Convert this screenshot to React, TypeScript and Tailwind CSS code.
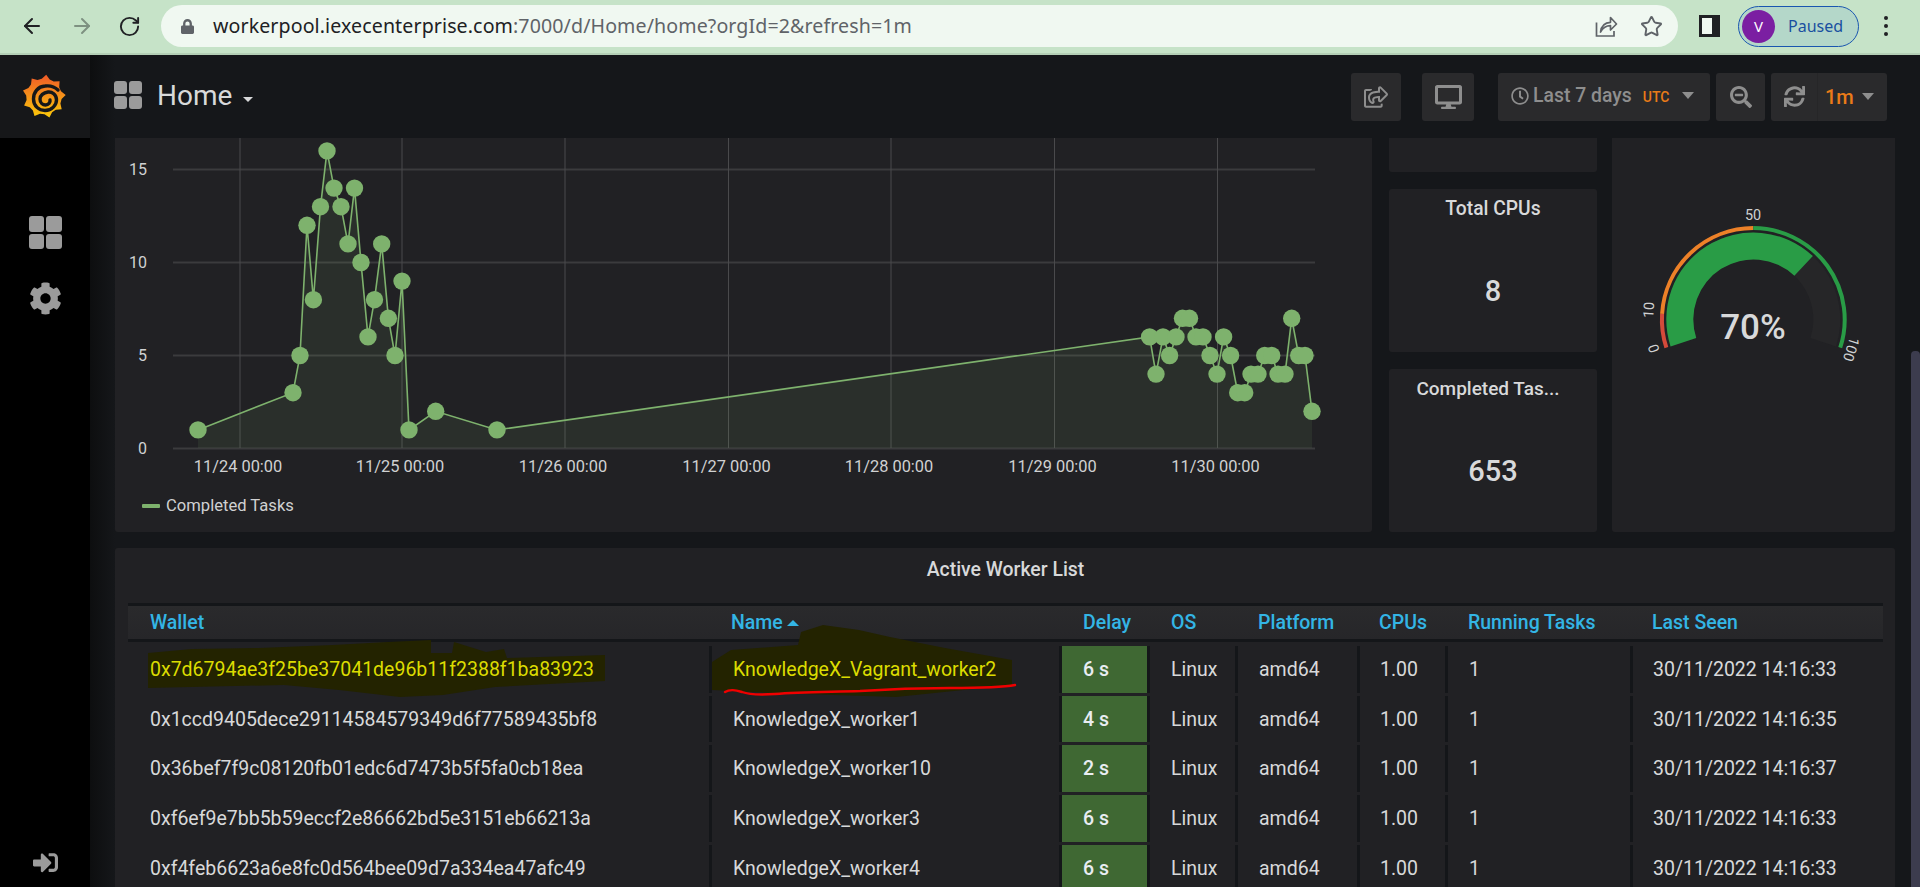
import React from "react";
import { ArrowLeft, ArrowRight, RotateCw, Star } from "lucide-react";
import { FaCog, FaDesktop, FaLock, FaRegClock, FaRegShareSquare, FaSearchMinus, FaSignInAlt, FaSync } from "react-icons/fa";

const pts: [number, number][] = [
  [198, 1], [293, 3], [300, 5], [307, 12], [313.4, 8], [320.5, 13], [327, 16], [334, 14], [341, 13], [348, 11], [354.5, 14],
  [361, 10], [368, 6], [374.5, 8], [381.7, 11], [388.4, 7], [395, 5], [402, 9], [409, 1], [435.7, 2], [497, 1],
  [1149.6, 6], [1156, 4], [1163, 6], [1169.6, 5], [1176, 6], [1182.5, 7], [1189.5, 7], [1196, 6], [1203, 6], [1210, 5],
  [1217, 4], [1223.6, 6], [1230.6, 5], [1237.7, 3], [1244.7, 3], [1251, 4], [1258, 4], [1264.7, 5], [1271.7, 5], [1278, 4],
  [1285, 4], [1291.7, 7], [1298.7, 5], [1305, 5], [1312, 2],
];
const yOf = (v: number) => 448.5 - v * 18.6;
const line = pts.map(([x, v]) => `${x},${yOf(v)}`).join(" ");
const area = `198,448 ${line} 1312,448`;
const vgrid: [number, string][] = [
  [240, "11/24 00:00"], [402, "11/25 00:00"], [565, "11/26 00:00"], [728.5, "11/27 00:00"],
  [891, "11/28 00:00"], [1054.5, "11/29 00:00"], [1217.5, "11/30 00:00"],
];

const cx = 1753.3, cy = 319.5;
const P = (r: number, a: number) => {
  const t = (a * Math.PI) / 180;
  return `${(cx - r * Math.cos(t)).toFixed(2)} ${(cy - r * Math.sin(t)).toFixed(2)}`;
};
const arc = (r: number, a: number, b: number) => `M${P(r, a)} A${r} ${r} 0 ${b - a > 180 ? 1 : 0} 1 ${P(r, b)}`;
const band = (r0: number, r1: number, a: number, b: number) =>
  `M${P(r1, a)} A${r1} ${r1} 0 ${b - a > 180 ? 1 : 0} 1 ${P(r1, b)} L${P(r0, b)} A${r0} ${r0} 0 ${b - a > 180 ? 1 : 0} 0 ${P(r0, a)} Z`;

const gearPts = (() => {
  const out: string[] = [];
  const n = 9;
  for (let i = 0; i < n; i++) {
    const a = (i / n) * Math.PI * 2 - Math.PI / 2 + 0.1;
    const s = (Math.PI * 2) / n;
    [[a - s * 0.32, 17.8], [a, 21.8], [a + s * 0.32, 17.8]].forEach(([t, r]) => {
      out.push(`${(21 + r * Math.cos(t)).toFixed(1)},${(22.5 + r * Math.sin(t)).toFixed(1)}`);
    });
  }
  return out.join(" ");
})();

function GrafanaLogo() {
  return (
    <svg width="44" height="46" viewBox="0 0 44 46">
      <defs>
        <linearGradient id="gf" x1="0" y1="0" x2="0" y2="1">
          <stop offset="0" stopColor="#f05a28" />
          <stop offset="1" stopColor="#fbca0a" />
        </linearGradient>
      </defs>
      <polygon points={gearPts} fill="url(#gf)" />
      <path d="M35 16 C31 12 26 11.5 22 12 C15 12.5 10.5 18 10.5 25 C10.5 32 16 36.5 22 36.5 C29 36.5 33.5 31 33.5 26 C33.5 20.5 29 17.5 25 18 C20.5 18.5 17 21.5 17 25 C17 29 20 31 22.5 31 C25.5 31 27.5 28.5 27 26" fill="none" stroke="#161719" strokeWidth="3.4" strokeLinecap="round" />
    </svg>
  );
}

function Tiles({ cls }: { cls: string }) {
  return (
    <div className={`grid grid-cols-2 gap-[2px] ${cls}`}>
      <span className="rounded-[3px] bg-[#9b9b9b]" />
      <span className="rounded-[3px] bg-[#9b9b9b]" />
      <span className="rounded-[3px] bg-[#9b9b9b]" />
      <span className="rounded-[3px] bg-[#9b9b9b]" />
    </div>
  );
}

function Caret({ cls }: { cls: string }) {
  return <span className={`block h-0 w-0 border-x-[6px] border-t-[7px] border-x-transparent ${cls}`} />;
}

const heads: [string, string][] = [
  ["Wallet", "pl-[22px]"], ["Name", "pl-[19px]"], ["Delay", "pl-[21px]"], ["OS", "pl-[21px]"],
  ["Platform", "pl-[20px]"], ["CPUs", "pl-[19px]"], ["Running Tasks", "pl-[20px]"], ["Last Seen", "pl-[19px]"],
];
const rows = [
  { h: "h-[47px]", w: "0x7d6794ae3f25be37041de96b11f2388f1ba83923", n: "KnowledgeX_Vagrant_worker2", d: "6 s", t: "30/11/2022 14:16:33", hl: true },
  { h: "h-[46px]", w: "0x1ccd9405dece29114584579349d6f77589435bf8", n: "KnowledgeX_worker1", d: "4 s", t: "30/11/2022 14:16:35", hl: false },
  { h: "h-[47px]", w: "0x36bef7f9c08120fb01edc6d7473b5f5fa0cb18ea", n: "KnowledgeX_worker10", d: "2 s", t: "30/11/2022 14:16:37", hl: false },
  { h: "h-[47px]", w: "0xf6ef9e7bb5b59eccf2e86662bd5e3151eb66213a", n: "KnowledgeX_worker3", d: "6 s", t: "30/11/2022 14:16:33", hl: false },
  { h: "h-[47px]", w: "0xf4feb6623a6e8fc0d564bee09d7a334ea47afc49", n: "KnowledgeX_worker4", d: "6 s", t: "30/11/2022 14:16:33", hl: false },
];
const tableCols = "grid grid-cols-[581px_347px_85px_85px_119px_85px_182px_250px] gap-x-[3px]";

function Cell({ children, cls = "pl-[21px]" }: { children: React.ReactNode; cls?: string }) {
  return (
    <div className={`flex items-center bg-[#212124] pt-[1px] ${cls}`}>
      <span className="relative z-10">{children}</span>
    </div>
  );
}

function StatPanel({ title, value, cls, tcls = "" }: { title: string; value: string; cls: string; tcls?: string }) {
  return (
    <div className={`flex flex-col items-center rounded-[3px] bg-[#212124] ${cls}`}>
      <div className={`mt-[8px] flex h-[24px] items-center font-medium text-[#d8d9da] ${tcls}`}>{title}</div>
      <div className="mt-[51px] flex h-[40px] items-center text-[29px] font-medium text-[#d8d9da]">{value}</div>
    </div>
  );
}

export default function App() {
  return (
    <div className="flex h-[887px] w-[1920px] flex-col overflow-hidden bg-[#15171a] [font-family:Roboto,sans-serif]">
      {/* browser chrome */}
      <div className="flex h-[55px] shrink-0 items-center border-b-2 border-[#b4cfb6] bg-[#c6e3c8] pb-[1px] [font-family:'Noto_Sans',sans-serif]">
        <ArrowLeft className="ml-[20px] h-[24px] w-[24px] text-[#202124]" strokeWidth={2} />
        <ArrowRight className="ml-[26px] h-[24px] w-[24px] text-[#7e9181]" strokeWidth={2} />
        <RotateCw className="ml-[24px] h-[23px] w-[23px] text-[#202124]" strokeWidth={2} />
        <div className="ml-[20px] flex h-[42px] w-[1517px] items-center rounded-full bg-[#f0f8f1]">
          <FaLock className="ml-[20px] h-[17px] w-[13px] text-[#5f6368]" />
          <div className="ml-[19px] text-[19.6px] tracking-[0.1px] text-[#5f6368]">
            <span className="text-[#202124]">workerpool.iexecenterprise.com</span>:7000/d/Home/home?orgId=2&amp;refresh=1m
          </div>
          <svg className="ml-auto" width="24" height="24" viewBox="0 0 24 24" fill="none" stroke="#5f6368" strokeWidth="1.7">
            <path d="M2.5 8.5V22H20v-5" />
            <path d="M6.5 18c.8-6 4.6-9.5 10-9.7V3.5l6 6.5-6 6v-4.4c-4.4 0-7.6 2-10 6.4Z" strokeLinejoin="round" />
          </svg>
          <Star className="ml-[22px] mr-[15px] h-[23px] w-[23px] text-[#5f6368]" strokeWidth={2} />
        </div>
        <div className="ml-[21px] flex h-[22px] w-[21px] items-center justify-start border-[3px] border-r-[8px] border-[#202124] bg-[#f0f8f1]" />
        <div className="ml-[18px] flex h-[41px] w-[121px] items-center rounded-full border-[1.5px] border-[#1a56b0] bg-[#b4d7c9]">
          <span className="ml-[3px] flex h-[33px] w-[33px] items-center justify-center rounded-full bg-[#7b1fa2] text-[15px] text-white">V</span>
          <span className="ml-[13px] text-[16px] text-[#1a4fa0]">Paused</span>
        </div>
        <div className="ml-[25px] flex flex-col gap-[4px]">
          <span className="h-[4px] w-[4px] rounded-full bg-[#202124]" />
          <span className="h-[4px] w-[4px] rounded-full bg-[#202124]" />
          <span className="h-[4px] w-[4px] rounded-full bg-[#202124]" />
        </div>
      </div>

      <div className="flex min-h-0 flex-1">
        {/* side menu */}
        <aside className="flex w-[90px] shrink-0 flex-col items-center bg-black">
          <div className="flex h-[83px] w-full shrink-0 items-center justify-center bg-[#161719]">
            <GrafanaLogo />
          </div>
          <Tiles cls="mt-[78px] h-[33px] w-[33px]" />
          <FaCog className="mt-[33px] h-[33px] w-[33px] text-[#9b9b9b]" />
          <FaSignInAlt className="mt-auto mb-[12px] h-[25px] w-[27px] text-[#9b9b9b]" />
        </aside>
        <div className="w-[25px] shrink-0 bg-gradient-to-r from-[#0d0e0f] to-[#15171a]" />

        <main className="relative flex min-w-0 flex-1 flex-col pr-[25px]">
          {/* dashboard navbar */}
          <header className="flex h-[83px] shrink-0 items-center">
            <Tiles cls="-mt-[3px] -ml-[1px] h-[28px] w-[28px]" />
            <span className="ml-[15px] -mt-[2px] text-[28px] leading-none text-[#d8d9da]">Home</span>
            <span className="ml-[11px] mt-[6px] block h-0 w-0 border-x-[5px] border-t-[5px] border-x-transparent border-t-[#d8d9da]" />
            <div className="ml-auto mr-[8px] flex h-[48px] items-stretch text-[#8e8e8e]">
              <div className="flex w-[50px] items-center justify-center rounded-[3px] bg-[#2a2a2c]">
                <FaRegShareSquare className="h-[22px] w-[24px] text-[#8e8e8e]" />
              </div>
              <div className="ml-[21px] flex w-[52px] items-center justify-center rounded-[3px] bg-[#2a2a2c]">
                <FaDesktop className="h-[24px] w-[27px] text-[#8e8e8e]" />
              </div>
              <div className="ml-[24px] flex w-[212px] items-center rounded-[3px] bg-[#2a2a2c] pb-[2px] pl-[13px]">
                <FaRegClock className="h-[18px] w-[18px]" />
                <span className="ml-[4px] text-[19.4px] font-medium">Last 7 days</span>
                <span className="ml-[11px] mt-[3px] text-[14px] font-medium text-[#eb7b18]">UTC</span>
                <Caret cls="ml-[13px] border-t-[#8e8e8e]" />
              </div>
              <div className="ml-[6px] flex w-[49px] items-center justify-center rounded-[3px] bg-[#2a2a2c]">
                <FaSearchMinus className="h-[22px] w-[22px]" />
              </div>
              <div className="ml-[6px] flex w-[116px] items-center rounded-[3px] bg-[#2a2a2c]">
                <div className="flex w-[47px] items-center justify-center self-stretch border-r border-[#262628]">
                  <FaSync className="h-[21px] w-[21px]" />
                </div>
                <span className="ml-[7px] text-[20px] font-medium text-[#eb7b18]">1m</span>
                <Caret cls="ml-[8px] border-t-[#8e8e8e]" />
              </div>
            </div>
          </header>

          {/* top row */}
          <div className="flex h-[394px] shrink-0">
            <section className="flex w-[1257px] flex-col rounded-b-[3px] bg-[#212124]">
              <svg className="block" width="1257" height="355" viewBox="115 138 1257 355" fontFamily="Roboto, sans-serif">
                {[0, 5, 10, 15].map((v) => (
                  <line key={v} x1="173" x2="1315" y1={yOf(v)} y2={yOf(v)} stroke="#3b3b3d" strokeWidth="2" />
                ))}
                {vgrid.map(([x]) => (
                  <line key={x} x1={x} x2={x} y1="138" y2="448" stroke="#4a4a4c" strokeWidth="1" />
                ))}
                <polygon points={area} fill="#7eb26d" fillOpacity="0.1" />
                <polyline points={line} fill="none" stroke="#7eb26d" strokeWidth="1.6" />
                {pts.map(([x, v]) => (
                  <circle key={x} cx={x} cy={yOf(v)} r="8.7" fill="#7eb26d" />
                ))}
                {[0, 5, 10, 15].map((v) => (
                  <text key={v} x="147" y={yOf(v) + 5} textAnchor="end" fontSize="16" fill="#d0d1d2">{v}</text>
                ))}
                {vgrid.map(([x, t]) => (
                  <text key={t} x={x - 2} y="472" textAnchor="middle" fontSize="16.4" fill="#d0d1d2">{t}</text>
                ))}
              </svg>
              <div className="mt-[1px] flex h-[24px] items-center pl-[27px] text-[16.6px] text-[#d0d1d2]">
                <span className="h-[4px] w-[18px] rounded-[1px] bg-[#7eb26d]" />
                <span className="ml-[6px]">Completed Tasks</span>
              </div>
            </section>

            <div className="ml-[17px] flex w-[208px] flex-col gap-[17px]">
              <div className="h-[34px] rounded-b-[3px] bg-[#212124]" />
              <StatPanel title="Total CPUs" value="8" cls="h-[163px]" tcls="text-[19.3px]" />
              <StatPanel title="Completed Tas..." value="653" cls="h-[163px]" tcls="-translate-x-[5px] text-[19px]" />
            </div>

            <section className="ml-[15px] w-[283px] rounded-b-[3px] bg-[#212124]">
              <svg className="block" width="283" height="394" viewBox="1612 138 283 394" fontFamily="Roboto, sans-serif">
                <path d={band(60, 87, -18, 198)} fill="#262628" />
                <path d={band(60, 87, -18, 133.2)} fill="#299c46" />
                <path d={arc(91.4, -18, 3.6)} fill="none" stroke="#d44a3a" strokeWidth="4" />
                <path d={arc(91.4, 3.6, 90)} fill="none" stroke="#ed8128" strokeWidth="4" />
                <path d={arc(91.4, 90, 198)} fill="none" stroke="#299c46" strokeWidth="4" />
                <text x="1753" y="220" textAnchor="middle" fontSize="14.4" fill="#d0d1d2">50</text>
                <text transform="translate(1650 310) rotate(-87)" textAnchor="middle" dominantBaseline="middle" fontSize="14.4" fill="#d0d1d2">10</text>
                <text transform="translate(1655 348) rotate(-108)" textAnchor="middle" dominantBaseline="middle" fontSize="14.4" fill="#d0d1d2">0</text>
                <text transform="translate(1850 349) rotate(108)" textAnchor="middle" dominantBaseline="middle" fontSize="14.4" fill="#d0d1d2">100</text>
                <text x="1753" y="339" textAnchor="middle" fontSize="35" fontWeight="500" fill="#d8d9da">70%</text>
              </svg>
            </section>
          </div>

          {/* worker table */}
          <section className="mt-[16px] min-h-0 flex-1 rounded-t-[3px] bg-[#212124] pl-[13px] pr-[12px]">
            <div className="flex h-[55px] items-center justify-center pb-[12px] text-[19.4px] font-medium text-[#d8d9da]">Active Worker List</div>
            <div className="relative text-[19.5px] text-[#d8d9da]">
              <div className={`${tableCols} h-[39px] border-y-[3px] border-[#141619] bg-gradient-to-b from-[#2a2a2c] to-[#262629] pt-[1px] text-[#33b5e5]`}>
                {heads.map(([h, pad]) => (
                  <div key={h} className={`flex items-center font-medium ${pad}`}>
                    {h}
                    {h === "Name" && <span className="ml-[4px] block h-0 w-0 border-x-[6px] border-b-[6px] border-x-transparent border-b-[#33b5e5]" />}
                  </div>
                ))}
              </div>
              <div className="h-[4px]" />
              {rows.map((r) => (
                <div key={r.w} className={`${tableCols} ${r.h} mb-[3px] bg-[#141619] ${r.hl ? "text-[#dcdc00]" : ""}`}>
                  <Cell cls="pl-[22px]">{r.w}</Cell>
                  <Cell>{r.n}</Cell>
                  <Cell cls="!bg-[#3f6833] pl-[21px] font-medium text-[#e9edf2]">{r.d}</Cell>
                  <Cell cls="pl-[21px] text-[#d8d9da]">Linux</Cell>
                  <Cell cls="pl-[21px] text-[#d8d9da]">amd64</Cell>
                  <Cell cls="pl-[20px] text-[#d8d9da]">1.00</Cell>
                  <Cell cls="pl-[21px] text-[#d8d9da]">1</Cell>
                  <Cell cls="pl-[20px] text-[#d8d9da]">{r.t}</Cell>
                </div>
              ))}
              {/* hand-drawn highlighter marks lying over the first row */}
              <svg className="pointer-events-none absolute left-0 top-0" width="1000" height="120" viewBox="128 603 1000 120">
                <polygon fill="#232300" points="148,653 192,649 259,648 333,645 388,642 431,640 431,653 452,653 454,642 486,652 504,649 507,658 605,655 605,681 495,687 443,695 400,697 339,690 284,685 148,688" />
                <polygon fill="#232300" points="712,662 731,650 798,645 801,632 823,625 859,630 890,637 945,648 1012,660 1012,685 896,697 773,693 712,690" />
                <path d="M725 692 C730 689 735 690 742 692 C750 695 760 695 775 694 C800 692 830 692 860 691 C890 689 920 688 950 688 C975 688 1000 688 1015 685" fill="none" stroke="#f00000" strokeWidth="2.4" strokeLinecap="round" />
              </svg>
            </div>
          </section>

          <div className="absolute right-0 top-[296px] bottom-0 w-[9px] rounded-t-[4px] bg-[#3c3c4e]" />
        </main>
      </div>
    </div>
  );
}
